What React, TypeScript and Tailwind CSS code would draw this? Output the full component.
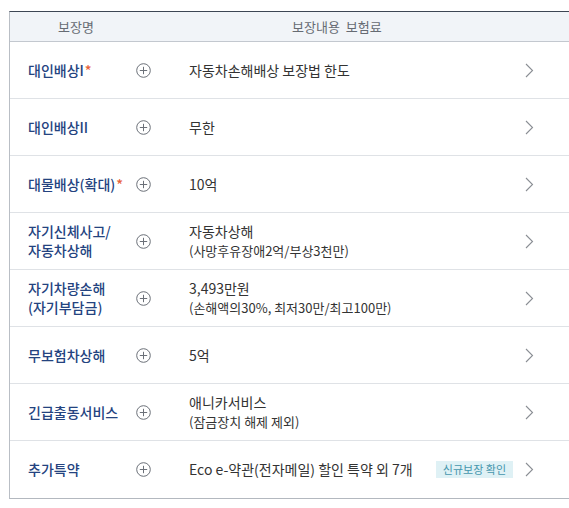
import React from 'react';

type Row = {
  name: React.ReactNode;
  star?: boolean;
  line1: string;
  line2?: string;
  badge?: string;
};

const rows: Row[] = [
  { name: '대인배상I', star: true, line1: '자동차손해배상 보장법 한도' },
  { name: '대인배상II', line1: '무한' },
  { name: '대물배상(확대)', star: true, line1: '10억' },
  { name: <>자기신체사고/<br />자동차상해</>, line1: '자동차상해', line2: '(사망후유장애2억/부상3천만)' },
  { name: <>자기차량손해<br />(자기부담금)</>, line1: '3,493만원', line2: '(손해액의30%, 최저30만/최고100만)' },
  { name: '무보험차상해', line1: '5억' },
  { name: '긴급출동서비스', line1: '애니카서비스', line2: '(잠금장치 해제 제외)' },
  { name: '추가특약', line1: 'Eco e-약관(전자메일) 할인 특약 외 7개', badge: '신규보장 확인' },
];

const PlusIcon = () => (
  <svg width="15" height="15" viewBox="0 0 15 15" fill="none">
    <circle cx="7.5" cy="7.5" r="6.8" stroke="#6b7078" strokeWidth="1" />
    <line x1="7.5" y1="3.8" x2="7.5" y2="11.2" stroke="#6b7078" strokeWidth="1" />
    <line x1="3.8" y1="7.5" x2="11.2" y2="7.5" stroke="#6b7078" strokeWidth="1" />
  </svg>
);

const Chevron = () => (
  <svg width="9" height="15" viewBox="0 0 9 15" fill="none">
    <polyline points="1,1 7.5,7.5 1,14" stroke="#8a8e94" strokeWidth="1.1" fill="none" />
  </svg>
);

export default function App() {
  return (
    <div
      className="w-[569px] h-[508px] overflow-hidden bg-white pt-[11px] pl-[9px]"
      style={{ fontFamily: '"Noto Sans CJK KR", "Noto Sans", sans-serif' }}
    >
      <div className="border-t border-l border-b border-t-[#3d4654] border-l-[#b9bec5] border-b-[#b3b8bf]">
        {/* header */}
        <div className="flex items-center h-[30px] bg-[#f1f4f8] border-b border-[#c3c8cf] text-[13px] text-[#666b73]">
          <span className="pl-[48px] w-[282px]">보장명</span>
          <span>보장내용</span>
          <span className="ml-[6px]">보험료</span>
        </div>

        {rows.map((r, i) => (
          <div
            key={i}
            className={`flex items-center h-[57px] ${i < rows.length - 1 ? 'border-b border-[#dfe2e6]' : ''}`}
          >
            <div className="w-[126px] pl-[18px] text-[14px] leading-[19px] font-medium text-[#24437f]">
              {r.name}
              {r.star && <span className="text-[#e8623a] ml-[1px]">*</span>}
            </div>
            <div className="w-[15px] flex items-center">
              <PlusIcon />
            </div>
            <div className="flex-1 ml-[38px] text-[#333]">
              <div className="text-[14px] leading-[19px]">{r.line1}</div>
              {r.line2 && <div className="text-[13px] leading-[19px]">{r.line2}</div>}
            </div>
            {r.badge && (
              <span className="bg-[#dff1f5] text-[#4596ad] text-[11px] leading-[17px] px-[7px] mr-[12px]">
                {r.badge}
              </span>
            )}
            <div className="mr-[35px] flex items-center">
              <Chevron />
            </div>
          </div>
        ))}
      </div>
    </div>
  );
}
